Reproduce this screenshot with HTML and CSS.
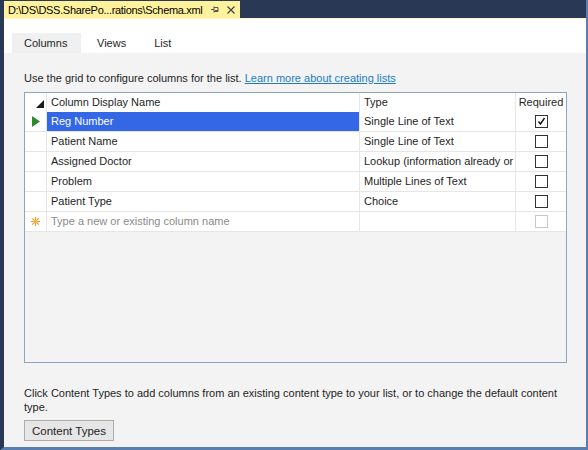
FILE: index.html
```html
<!DOCTYPE html>
<html>
<head>
<meta charset="utf-8">
<link rel="stylesheet" href="styles.css">
</head>
<body>
<div class="frame">
  <div class="titlebar">
    <div class="doctab">
      <span class="docname">D:\DS\DSS.SharePo...rations\Schema.xml</span>
      <svg class="pin" width="9" height="9" viewBox="0 0 9 9"><path d="M0 4.5h3M3 1.5v6M3 2.5h4v4H3M4 5.5h3" fill="none" stroke="#555" stroke-width="1"/></svg>
      <svg class="close" width="8" height="8" viewBox="0 0 8 8"><path d="M0.5 0.5l7 7M7.5 0.5l-7 7" stroke="#444" stroke-width="1.2"/></svg>
    </div>
  </div>
  <div class="tabstrip">
    <div class="tab active">Columns</div>
    <div class="tab">Views</div>
    <div class="tab">List</div>
  </div>
  <div class="content">
    <p class="intro">Use the grid to configure columns for the list. <a class="link">Learn more about creating lists</a></p>
    <div class="grid">
      <div class="row head">
        <div class="rh"><svg width="8" height="8" viewBox="0 0 8 8"><path d="M8 0V8H0Z" fill="#1a1a1a"/></svg></div>
        <div class="c name">Column Display Name</div>
        <div class="c type">Type</div>
        <div class="c req">Required</div>
      </div>
      <div class="row">
        <div class="rh"><svg width="8" height="11" viewBox="0 0 8 11"><path d="M0 0L8 5.5L0 11Z" fill="#2f8a2f"/></svg></div>
        <div class="c name sel">Reg Number</div>
        <div class="c type">Single Line of Text</div>
        <div class="c req"><span class="cb checked"><svg width="9" height="9" viewBox="0 0 9 9"><path d="M1.5 4.5L3.5 7L7.5 1" fill="none" stroke="#111" stroke-width="1.4"/></svg></span></div>
      </div>
      <div class="row">
        <div class="rh"></div>
        <div class="c name">Patient Name</div>
        <div class="c type">Single Line of Text</div>
        <div class="c req"><span class="cb"></span></div>
      </div>
      <div class="row">
        <div class="rh"></div>
        <div class="c name">Assigned Doctor</div>
        <div class="c type">Lookup (information already or</div>
        <div class="c req"><span class="cb"></span></div>
      </div>
      <div class="row">
        <div class="rh"></div>
        <div class="c name">Problem</div>
        <div class="c type">Multiple Lines of Text</div>
        <div class="c req"><span class="cb"></span></div>
      </div>
      <div class="row">
        <div class="rh"></div>
        <div class="c name">Patient Type</div>
        <div class="c type">Choice</div>
        <div class="c req"><span class="cb"></span></div>
      </div>
      <div class="row">
        <div class="rh"><svg width="9" height="9" viewBox="0 0 9 9"><g stroke="#e0a030" stroke-width="1.2"><path d="M4.5 0v9M0 4.5h9M1.3 1.3l6.4 6.4M7.7 1.3l-6.4 6.4"/></g><circle cx="4.5" cy="4.5" r="2" fill="#f0b840"/></svg></div>
        <div class="c name placeholder">Type a new or existing column name</div>
        <div class="c type"></div>
        <div class="c req"><span class="cb disabled"></span></div>
      </div>
    </div>
    <p class="note">Click Content Types to add columns from an existing content type to your list, or to change the default content type.</p>
    <button class="btn">Content Types</button>
  </div>
</div>
</body>
</html>
```
FILE: styles.css
```css
html, body {
  margin: 0;
  padding: 0;
  width: 588px;
  height: 450px;
  overflow: hidden;
  background: #f3f3f3;
}
body {
  font-family: "Liberation Sans", Arial, sans-serif;
  font-size: 11px;
  color: #1e1e1e;
}
.frame {
  box-sizing: border-box;
  width: 588px;
  height: 450px;
  border-left: 4px solid #293955;
  border-right: 2px solid #5b7db0;
  border-bottom: 3px solid #5b7db0;
  display: flex;
  flex-direction: column;
  background: #f3f3f3;
}
.titlebar {
  background: #293955;
  height: 17px;
  padding-top: 1px;
  display: flex;
  border-bottom: 1px solid #fff5c0;
}
.doctab {
  background: #fff29d;
  height: 17px;
  display: flex;
  align-items: center;
  padding: 0 5px 0 4px;
  box-sizing: border-box;
  color: #000;
}
.docname {
  font-size: 11px;
  letter-spacing: -0.32px;
  white-space: nowrap;
}
.pin { margin-left: 9px; flex-shrink: 0; }
.close { margin-left: 7px; flex-shrink: 0; }
.tabstrip {
  background: #fff;
  height: 34px;
  display: flex;
  align-items: flex-end;
  padding-left: 8px;
}
.tab {
  height: 20px;
  line-height: 20px;
  padding: 0 14px;
  color: #1e1e1e;
  margin-right: 0;
}
.tab.active {
  background: #f0f0f0;
  padding: 0 12px;
  width: 45px;
  margin-right: 2px;
}
.content {
  flex: 1;
  padding: 18px 20px 0 20px;
}
.intro {
  margin: 0 0 6px 0;
  line-height: 15px;
}
.link {
  color: #1c7cc8;
  text-decoration: underline;
}
.grid {
  box-sizing: border-box;
  width: 543px;
  height: 271px;
  border: 1px solid #8fa4c0;
  background: #f3f3f3;
}
.row {
  display: flex;
  height: 20px;
  background: #fff;
  border-bottom: 1px solid #e6e6e6;
  box-sizing: border-box;
}
.row.head {
  height: 19px;
  border-bottom: none;
}
.rh {
  width: 22px;
  border-right: 1px solid #e6e6e6;
  display: flex;
  align-items: center;
  justify-content: center;
  box-sizing: border-box;
}
.row.head .rh {
  justify-content: flex-end;
  padding-right: 2px;
  padding-top: 2px;
}
.c {
  box-sizing: border-box;
  line-height: 19px;
  padding-left: 4px;
  white-space: nowrap;
  overflow: hidden;
}
.name { width: 313px; border-right: 1px solid #e6e6e6; }
.type { width: 156px; border-right: 1px solid #e6e6e6; }
.req { flex: 1; display: flex; align-items: center; justify-content: center; padding-left: 0; }
.sel {
  background: #3367e6;
  color: #fff;
}
.placeholder { color: #8a8a8a; }
.cb {
  width: 13px;
  height: 13px;
  box-sizing: border-box;
  border: 1px solid #333;
  background: #fff;
  display: flex;
  align-items: center;
  justify-content: center;
}
.cb.disabled { border-color: #c8c8c8; }
.note {
  margin: 23px 0 6px 0;
  line-height: 14px;
}
.btn {
  font-family: inherit;
  font-size: 11.5px;
  color: #1e1e1e;
  background: #e6e6e6;
  border: 1px solid #adadad;
  height: 21px;
  width: 90px;
  padding: 0;
}
```
